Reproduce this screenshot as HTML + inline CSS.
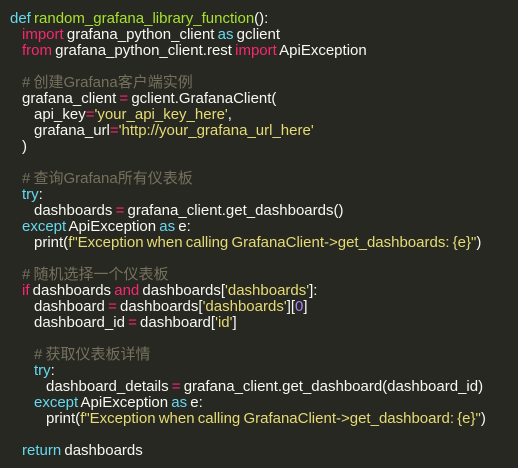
<!DOCTYPE html>
<html><head><style>
body{margin:0;background:#272822;width:518px;height:468px;overflow:hidden}
pre{margin:0;padding:11px 0 0 10px;font-family:"Liberation Sans","Noto Sans CJK SC",sans-serif;font-size:15px;line-height:16px;color:#f8f8f2;white-space:pre;word-spacing:-1px}
.k{color:#f92672}.c{color:#66d9ef}.g{color:#a6e22e}.s{color:#e6db74}.m{color:#75715e}.n{color:#ae81ff}
i{display:inline-block;width:12px;font-style:normal}
</style></head><body><pre><span class="c">def</span> <span class="g">random_grafana_library_function</span>():
<i></i><span class="k">import</span> grafana_python_client <span class="c">as</span> gclient
<i></i><span class="k">from</span> grafana_python_client.rest <span class="k">import</span> ApiException

<i></i><span class="m"># 创建Grafana客户端实例</span>
<i></i>grafana_client <span class="k">=</span> gclient.GrafanaClient(
<i></i><i></i>api_key<span class="k">=</span><span class="s">'your_api_key_here'</span>,
<i></i><i></i>grafana_url<span class="k">=</span><span class="s">'http://your_grafana_url_here'</span>
<i></i>)

<i></i><span class="m"># 查询Grafana所有仪表板</span>
<i></i><span class="c">try</span>:
<i></i><i></i>dashboards <span class="k">=</span> grafana_client.get_dashboards()
<i></i><span class="c">except</span> ApiException <span class="c">as</span> e:
<i></i><i></i>print(<span class="s">f"Exception when calling GrafanaClient-&gt;get_dashboards: {e}"</span>)

<i></i><span class="m"># 随机选择一个仪表板</span>
<i></i><span class="k">if</span> dashboards <span class="k">and</span> dashboards[<span class="s">'dashboards'</span>]:
<i></i><i></i>dashboard <span class="k">=</span> dashboards[<span class="s">'dashboards'</span>][<span class="n">0</span>]
<i></i><i></i>dashboard_id <span class="k">=</span> dashboard[<span class="s">'id'</span>]

<i></i><i></i><span class="m"># 获取仪表板详情</span>
<i></i><i></i><span class="c">try</span>:
<i></i><i></i><i></i>dashboard_details <span class="k">=</span> grafana_client.get_dashboard(dashboard_id)
<i></i><i></i><span class="c">except</span> ApiException <span class="c">as</span> e:
<i></i><i></i><i></i>print(<span class="s">f"Exception when calling GrafanaClient-&gt;get_dashboard: {e}"</span>)

<i></i><span class="c">return</span> dashboards</pre></body></html>
